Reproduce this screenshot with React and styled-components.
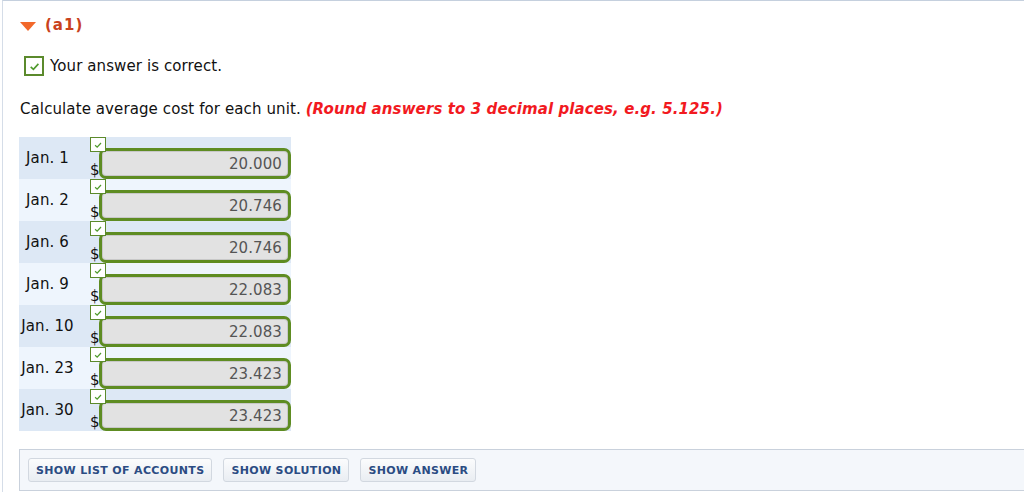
import React from 'react';
import styled, { createGlobalStyle } from 'styled-components';

const GlobalStyle = createGlobalStyle`
  body {
    margin: 0;
    background: #fff;
    font-family: "DejaVu Sans", Verdana, sans-serif;
    color: #111;
  }
`;

const Page = styled.div`
  margin-left: 2px;
  height: 492px;
  box-sizing: border-box;
  border-left: 1px solid #d5dde8;
  border-top: 1px solid #c5d0de;
  padding: 15px 0 0 16px;
  overflow: hidden;
  letter-spacing: 0.1px;
`;

const Header = styled.div`
  display: flex;
  align-items: center;
  gap: 9px;
  padding-left: 1px;
`;

const Triangle = styled.span`
  width: 0;
  height: 0;
  border-left: 8px solid transparent;
  border-right: 8px solid transparent;
  border-top: 9px solid #f2682a;
  margin-top: 2px;
`;

const PartLabel = styled.span`
  font-size: 15px;
  font-weight: bold;
  color: #c9421c;
  letter-spacing: 1px;
`;

const Status = styled.div`
  display: flex;
  align-items: center;
  gap: 6px;
  margin: 22px 0 0 5px;
  font-size: 15px;
`;

const BigCheck = styled.span`
  width: 16px;
  height: 16px;
  border: 2px solid #5b8a2c;
  background: #fff;
  display: flex;
  align-items: center;
  justify-content: center;
`;

const Question = styled.p`
  margin: 24px 0 0 1px;
  font-size: 15px;
`;

const Hint = styled.span`
  color: #f21a1f;
  font-weight: bold;
  font-style: italic;
`;

const Table = styled.div`
  margin-top: 19px;
  width: 272px;
`;

const Row = styled.div`
  display: flex;
  height: 42px;
  background: ${({ odd }) => (odd ? '#dde8f5' : '#eef5fd')};
`;

const Label = styled.div`
  width: 57px;
  display: flex;
  align-items: center;
  justify-content: center;
  font-size: 15px;
  white-space: nowrap;
`;

const ValueCell = styled.div`
  position: relative;
  margin-left: 14px;
  padding-top: 10px;
  display: flex;
  align-items: flex-end;
`;

const SmallCheck = styled.span`
  position: absolute;
  top: 0;
  left: 0;
  width: 14px;
  height: 13px;
  border: 1px solid #5b8a2c;
  background: #fff;
  display: flex;
  align-items: center;
  justify-content: center;
  z-index: 1;
`;

const Dollar = styled.span`
  font-size: 15px;
  line-height: 16px;
  width: 9px;
  margin-bottom: 1px;
`;

const Input = styled.div`
  width: 192px;
  height: 31px;
  box-sizing: border-box;
  border: 3px solid #5e8c22;
  border-radius: 7px;
  background: #e2e2e2;
  box-shadow: inset 0 0 0 1px #c8c8c8;
  display: flex;
  align-items: center;
  justify-content: flex-end;
  padding-right: 6px;
  font-size: 15px;
  color: #555;
`;

const ButtonBar = styled.div`
  margin-top: 18px;
  height: 42px;
  box-sizing: border-box;
  background: #f4f7fb;
  border: 1px solid #c9d1dc;
  border-right: none;
  display: flex;
  align-items: center;
  gap: 11px;
  padding-left: 8px;
`;

const Button = styled.button`
  height: 24px;
  padding: 0 7px;
  border: 1px solid #d2d8e0;
  border-radius: 3px;
  background: linear-gradient(#fbfcfd, #e9edf2);
  font-family: "DejaVu Sans", Verdana, sans-serif;
  font-size: 11px;
  font-weight: bold;
  color: #2b4c83;
  letter-spacing: 0.35px;
  cursor: pointer;
`;

const Tick = ({ size }) => (
  <svg width={size} height={size} viewBox="0 0 12 12">
    <path d="M2.5 6.3 L5 8.6 L9.6 3.6" fill="none" stroke="#4f9a2c" strokeWidth="1.5" />
  </svg>
);

const rows = [
  ['Jan. 1', '20.000'],
  ['Jan. 2', '20.746'],
  ['Jan. 6', '20.746'],
  ['Jan. 9', '22.083'],
  ['Jan. 10', '22.083'],
  ['Jan. 23', '23.423'],
  ['Jan. 30', '23.423'],
];

const App = () => {
  return (
    <>
      <GlobalStyle />
      <Page>
        <Header>
          <Triangle />
          <PartLabel>(a1)</PartLabel>
        </Header>
        <Status>
          <BigCheck><Tick size={13} /></BigCheck>
          Your answer is correct.
        </Status>
        <Question>
          Calculate average cost for each unit.{' '}
          <Hint>(Round answers to 3 decimal places, e.g. 5.125.)</Hint>
        </Question>
        <Table>
          {rows.map(([label, value], i) => (
            <Row key={label} odd={i % 2 === 0}>
              <Label>{label}</Label>
              <ValueCell>
                <SmallCheck><Tick size={10} /></SmallCheck>
                <Dollar>$</Dollar>
                <Input>{value}</Input>
              </ValueCell>
            </Row>
          ))}
        </Table>
        <ButtonBar>
          <Button>SHOW LIST OF ACCOUNTS</Button>
          <Button>SHOW SOLUTION</Button>
          <Button>SHOW ANSWER</Button>
        </ButtonBar>
      </Page>
    </>
  );
};

export default App;
